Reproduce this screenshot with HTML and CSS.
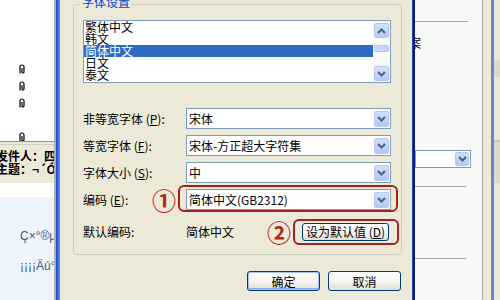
FILE: index.html
```html
<!DOCTYPE html>
<html lang="zh-CN">
<head>
<meta charset="utf-8">
<title>字体设置</title>
<link rel="stylesheet" href="styles.css">
</head>
<body>
<div class="screen">
  <div class="left-win">
    <div class="msg-list">
      <div class="clip-row"><svg width="8" height="10" viewBox="0 0 8 10"><path d="M2 9.5V3a2 2 0 0 1 4 0v5a1 1 0 0 1-2 0V4" fill="none" stroke="#000" stroke-width="1.2"/></svg></div>
      <div class="clip-row"><svg width="8" height="10" viewBox="0 0 8 10"><path d="M2 9.5V3a2 2 0 0 1 4 0v5a1 1 0 0 1-2 0V4" fill="none" stroke="#000" stroke-width="1.2"/></svg></div>
      <div class="clip-row"><svg width="8" height="10" viewBox="0 0 8 10"><path d="M2 9.5V3a2 2 0 0 1 4 0v5a1 1 0 0 1-2 0V4" fill="none" stroke="#000" stroke-width="1.2"/></svg></div>
      <div class="clip-row"></div>
      <div class="clip-row"><svg width="8" height="10" viewBox="0 0 8 10"><path d="M2 9.5V3a2 2 0 0 1 4 0v5a1 1 0 0 1-2 0V4" fill="none" stroke="#000" stroke-width="1.2"/></svg></div>
    </div>
    <div class="msg-sep"></div>
    <div class="msg-head">
      <div class="head-line">发件人：四</div>
      <div class="head-line">主题：¬´Ó</div>
    </div>
    <div class="msg-gap"></div>
    <div class="msg-body">
      <p>Ç×°®µÄÂ</p>
      <p>¡¡¡¡Äú°Ã£</p>
    </div>
  </div>

  <div class="frame-l"></div>

  <div class="dialog">
    <div class="group">
      <div class="group-title">字体设置</div>
      <div class="listbox">
        <div class="list-items">
          <div class="list-item">繁体中文</div>
          <div class="list-item">韩文</div>
          <div class="list-item sel">简体中文</div>
          <div class="list-item">日文</div>
          <div class="list-item">泰文</div>
        </div>
        <div class="scrollbar">
          <div class="sb-btn"><svg width="9" height="6" viewBox="0 0 9 6"><path d="M1 5L4.5 1.5L8 5" fill="none" stroke="#4d6185" stroke-width="2"/></svg></div>
          <div class="sb-thumb"></div>
          <div class="sb-btn down"><svg width="9" height="6" viewBox="0 0 9 6"><path d="M1 1L4.5 4.5L8 1" fill="none" stroke="#4d6185" stroke-width="2"/></svg></div>
        </div>
      </div>

      <div class="form">
        <div class="row">
          <div class="lbl">非等宽字体 (<u>P</u>):</div>
          <div class="combo"><span class="combo-text">宋体</span><span class="dd"><svg width="9" height="6" viewBox="0 0 9 6"><path d="M1 1L4.5 4.5L8 1" fill="none" stroke="#4d6185" stroke-width="2"/></svg></span></div>
        </div>
        <div class="row">
          <div class="lbl">等宽字体 (<u>F</u>):</div>
          <div class="combo"><span class="combo-text">宋体-方正超大字符集</span><span class="dd"><svg width="9" height="6" viewBox="0 0 9 6"><path d="M1 1L4.5 4.5L8 1" fill="none" stroke="#4d6185" stroke-width="2"/></svg></span></div>
        </div>
        <div class="row">
          <div class="lbl">字体大小 (<u>S</u>):</div>
          <div class="combo"><span class="combo-text">中</span><span class="dd"><svg width="9" height="6" viewBox="0 0 9 6"><path d="M1 1L4.5 4.5L8 1" fill="none" stroke="#4d6185" stroke-width="2"/></svg></span></div>
        </div>
        <div class="row">
          <div class="lbl lbl-num"><span>编码 (<u>E</u>):</span><span class="num">①</span></div>
          <div class="hl">
            <div class="combo"><span class="combo-text">简体中文(GB2312)</span><span class="dd"><svg width="9" height="6" viewBox="0 0 9 6"><path d="M1 1L4.5 4.5L8 1" fill="none" stroke="#4d6185" stroke-width="2"/></svg></span></div>
          </div>
        </div>
        <div class="row row-default">
          <div class="lbl">默认编码:</div>
          <div class="val">简体中文</div>
          <span class="num num2">②</span>
          <div class="hl hl2"><button class="btn btn-set" type="button">设为默认值 (<u>D</u>)</button></div>
        </div>
      </div>
    </div>
    <div class="actions">
      <button class="btn btn-main default" type="button">确定</button>
      <button class="btn btn-main" type="button">取消</button>
    </div>
  </div>

  <div class="frame-r"></div>

  <div class="right-win">
    <div class="rw-line"></div>
    <div class="rw-char">案</div>
    <div class="rw-combo"><span class="dd dd-small"><svg width="9" height="6" viewBox="0 0 9 6"><path d="M1 1L4.5 4.5L8 1" fill="none" stroke="#4d6185" stroke-width="2"/></svg></span></div>
    <div class="rw-line l2"></div>
    <div class="rw-line l3"></div>
  </div>

  <div class="edge">
    <div class="edge-gray"></div>
    <div class="edge-beige"></div>
    <div class="edge-blue"></div>
    <div class="edge-rest">
      <div class="edge-bit b1"></div>
      <div class="edge-bit b2"></div>
    </div>
  </div>
</div>
</body>
</html>
```

FILE: styles.css
```css
* { box-sizing: border-box; }
html, body { margin: 0; padding: 0; }
body {
  width: 500px;
  height: 300px;
  overflow: hidden;
  background: #ece9d8;
  font-family: "Noto Sans CJK SC", "Noto Sans", sans-serif;
  font-size: 12px;
  color: #000;
}
.screen { display: flex; height: 300px; }

/* left background window */
.left-win {
  width: 56px;
  flex: none;
  display: flex;
  flex-direction: column;
  border-right: 2px solid #b3b1a7;
  overflow: hidden;
}
.msg-list { height: 141px; flex: none; background: #fff; padding: 64px 0 0 18px; }
.clip-row { height: 17px; }
.clip-row svg { display: block; }
.msg-sep {
  height: 4px;
  flex: none;
  background: #ece9d8;
  border-top: 1px solid #8f8f8f;
  border-bottom: 1px solid #d2cfc2;
}
.msg-head { height: 38px; flex: none; background: #ece9d8; padding-top: 4px; white-space: nowrap; }
.head-line { height: 13px; line-height: 13px; margin-left: -4px; font-weight: bold; }
.msg-gap { height: 14px; flex: none; background: #fff; }
.msg-body {
  flex: 1;
  background: #eef4fb;
  padding: 32px 0 0 20px;
  color: #3e5683;
  font-family: "Liberation Sans", sans-serif;
  white-space: nowrap;
}
.msg-body p { margin: 0; line-height: 15px; }
.msg-body p + p { margin-top: 15px; }

/* window frames */
.frame-l { width: 4px; flex: none; background: linear-gradient(90deg, #1c4cc9, #3b6de2 60%, #7592e4); }
.frame-r { width: 3px; flex: none; background: linear-gradient(90deg, #3552b8, #0b2286 45%, #091c73); }

/* dialog */
.dialog { width: 352px; flex: none; background: #ece9d8; padding: 0 10px 0 13px; }
.group {
  margin-top: 4px;
  height: 251px;
  border: 1px solid #d0d0bf;
  border-radius: 4px;
  padding: 0 10px 0 9px;
}
.group-title {
  display: table;
  margin: -9px 0 0 -3px;
  padding: 0 2px;
  height: 12px;
  line-height: 12px;
  color: #0046d5;
  background: #ece9d8;
}
.listbox {
  margin-top: 12px;
  width: 308px;
  height: 63px;
  border: 1px solid #7f9db9;
  background: #fff;
  display: flex;
}
.list-items { flex: 1; }
.list-item { height: 12px; line-height: 12px; padding-left: 1px; white-space: nowrap; }
.list-item.sel { background: #316ac5; color: #fff; }
.scrollbar {
  width: 17px;
  flex: none;
  display: flex;
  flex-direction: column;
  padding: 2px 1px 1px;
  background: #fafaf7;
}
.sb-btn {
  height: 15px;
  border: 1px solid #b4c6f0;
  border-radius: 2px;
  background: linear-gradient(#d6e1fc, #b8cbf6);
  display: flex;
  align-items: center;
  justify-content: center;
}
.sb-btn svg { display: block; }
.sb-thumb {
  margin-top: 7px;
  height: 7px;
  border: 1px solid #b4c6f0;
  border-radius: 2px;
  background: linear-gradient(90deg, #cfdbfb, #bccff8);
}
.sb-btn.down { margin-top: auto; }

.form { margin-top: 25px; display: flex; flex-direction: column; gap: 6px; }
.row { display: flex; align-items: center; height: 21px; }
.lbl { width: 103px; flex: none; white-space: nowrap; line-height: 21px; }
.lbl-num { display: flex; align-items: center; }
.combo {
  width: 205px;
  height: 21px;
  flex: none;
  border: 1px solid #7f9db9;
  background: #fff;
  display: flex;
  align-items: center;
  padding-left: 2px;
}
.combo-text { flex: 1; white-space: nowrap; line-height: 19px; }
.dd {
  width: 15px;
  height: 16px;
  margin-right: 1px;
  border: 1px solid #b9c9ef;
  border-radius: 2px;
  background: linear-gradient(#d3defb, #b4c7f5);
  display: flex;
  align-items: center;
  justify-content: center;
}
.dd svg { display: block; }

.num {
  font-size: 24px;
  font-weight: 700;
  line-height: 21px;
  color: #b3261c;
  width: 23px;
  text-align: center;
}
.lbl-num .num { margin-left: auto; margin-right: 11px; }
.hl {
  display: flex;
  margin: -4px -7px -2px -8px;
  padding: 2px 5px 0 6px;
  border: 2px solid #a3211c;
  border-radius: 6px;
}
.row-default { margin-top: 5px; }
.val { width: 81px; flex: none; line-height: 21px; }
.num2 { width: 24px; flex: none; }
.hl2 { margin: -3px 0 -3px 2px; padding: 2px 8px 2px 7px; }

.btn {
  font: inherit;
  color: #000;
  padding: 0;
  border: 1px solid #003c74;
  border-radius: 3px;
  background: linear-gradient(#ffffff, #f4f3ee 55%, #e2ded3);
  display: flex;
  align-items: center;
  justify-content: center;
  white-space: nowrap;
}
.btn-set { width: 87px; height: 18px; line-height: 16px; }
.actions { display: flex; justify-content: flex-end; gap: 8px; margin-top: 16px; padding-right: 1px; }
.btn-main { width: 73px; height: 20px; }
.btn-main.default { box-shadow: inset 0 0 0 1px #a9c3f0, inset 0 -1px 0 1px #8cabe6; }

/* right background window */
.right-win { width: 67px; flex: none; background: #f8f8f6; padding-top: 21px; overflow: hidden; }
.rw-line { height: 1px; width: 53px; background: #a6a6a6; }
.rw-char { margin: 15px 0 0 -6px; height: 12px; line-height: 12px; }
.rw-combo {
  margin-top: 101px;
  width: 56px;
  height: 18px;
  border: 1px solid #7f9db9;
  background: #fff;
  display: flex;
  justify-content: flex-end;
  align-items: center;
}
.dd-small { height: 14px; width: 14px; }
.rw-line.l2 { margin-top: 18px; width: 51px; }
.rw-line.l3 { margin-top: 71px; width: 51px; }

.edge { flex: 1; display: flex; }
.edge-gray { width: 1px; background: #a9a8a2; }
.edge-beige { width: 8px; background: #ece9d8; }
.edge-blue { width: 3px; background: #6c82de; }
.edge-rest { flex: 1; background: #e9e6da; padding-top: 60px; }
.edge-bit { background: #dcd9cc; }
.edge-bit.b1 { height: 17px; }
.edge-bit.b2 { height: 43px; margin-top: 63px; border-top: 2px solid #c9c6b9; }
```
